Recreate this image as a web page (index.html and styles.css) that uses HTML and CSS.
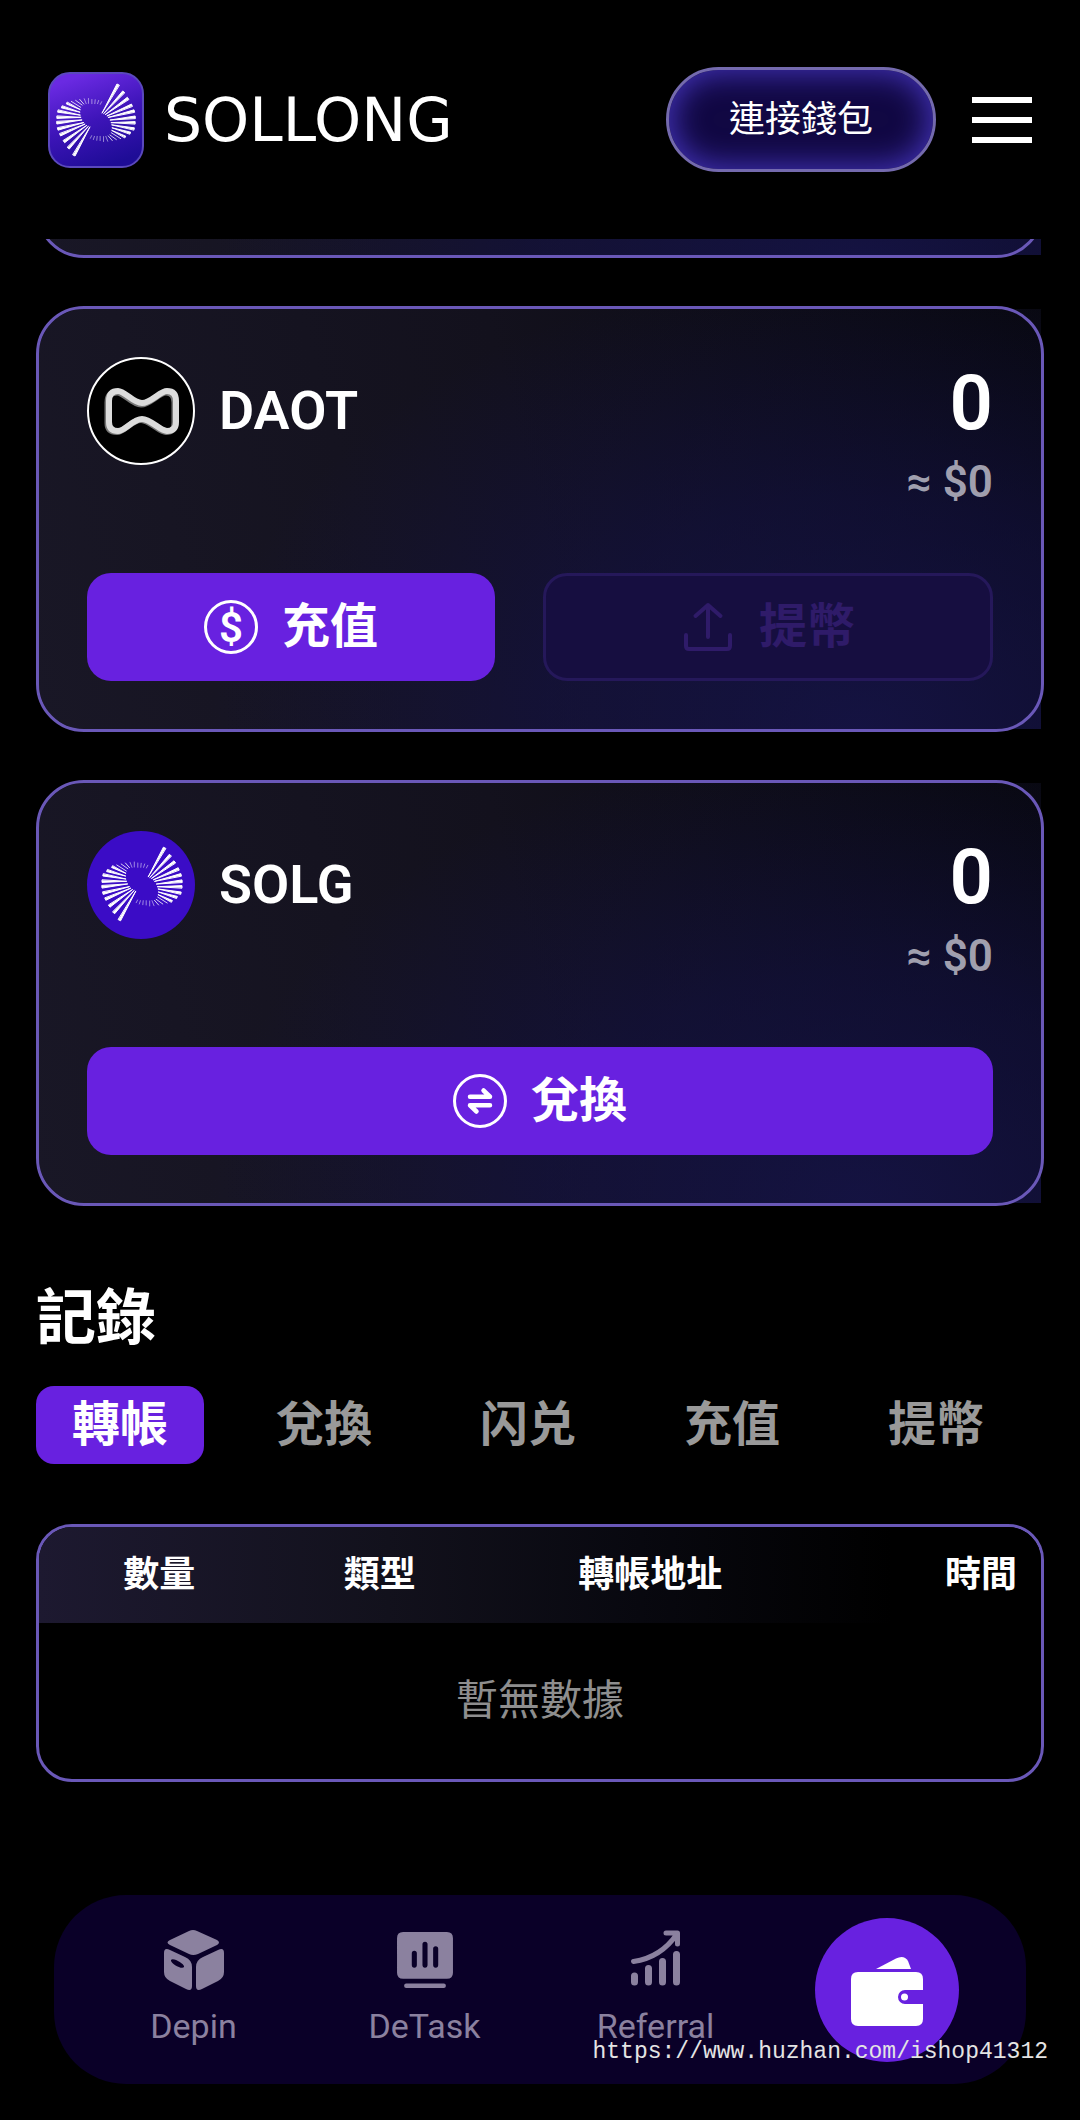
FILE: index.html
```html
<!DOCTYPE html>
<html lang="zh-Hant">
<head>
<meta charset="UTF-8" />
<meta name="viewport" content="width=device-width, initial-scale=1" />
<title>SOLLONG</title>
<link rel="stylesheet" href="styles.css">
</head>
<body>
  <!-- shared shapes -->
  <svg class="defs" aria-hidden="true">
    <symbol id="burst" viewBox="0 0 108 108">
      <g id="fan" fill="#fff" stroke="#fff" stroke-linecap="round" stroke-linejoin="round">
        <g stroke-width="1">
          <path d="M61.3 45.7 76.4 16.2 78.6 17.3z"/>
          <path d="M63 46.3 82.3 23.3 84.2 24.9z"/>
          <path d="M64.7 47.3 87 29.8 88.4 31.7z"/>
          <path d="M66.5 48.7 91.2 36.7 92.1 38.8z"/>
          <path d="M67.8 50.3 93.8 42.6 94.4 44.8z"/>
          <path d="M69.6 53 95 48.9 95.2 51.2z"/>
          <path d="M70.6 55.7 95 54.6 95 56.8z"/>
          <path d="M71.3 58 94.2 61 93.8 63z"/>
          <path d="M71.6 61 90.4 65.4 89.7 67.2z"/>
          <path d="M71.3 63.7 85.4 69.5 84.6 71z"/>
        </g>
        <g stroke-width="1" fill="none" opacity=".8">
          <path d="M70.6 66 80.2 72M69.2 68.3 75.8 73M67.5 69.3 71.6 74"/>
        </g>
        <g stroke-width="1" fill="none" opacity=".5">
          <path d="M65 69.7 67 74.7M62.7 70V75M59.2 69.7V74M56.2 69.7 55.8 73.7M53.4 69.7 52.3 73M50.6 69 49.2 71.7"/>
        </g>
      </g>
      <use href="#fan" transform="rotate(180 55 53)"/>
    </symbol>
  </svg>

  <header class="header">
    <a class="brand" href="#" aria-label="SOLLONG">
      <span class="brand-mark"><svg viewBox="8 6 94 94" aria-hidden="true"><use href="#burst" width="108" height="108"/></svg></span>
      <span class="brand-name">SOLLONG</span>
    </a>
    <div class="header-right">
      <button type="button" class="connect">連接錢包</button>
      <button type="button" class="menu" aria-label="Menu"><span></span><span></span><span></span></button>
    </div>
  </header>

  <main class="main">
    <section class="assets">
      <div class="card-peek">
        <div class="card"></div>
      </div>

      <article class="card">
        <div class="card-top">
          <div class="token">
            <svg class="token-icon" viewBox="0 0 108 108" aria-hidden="true">
              <circle cx="54" cy="54" r="53" fill="#000" stroke="#fff" stroke-width="2"/>
              <g fill="none" stroke-width="6">
                <path stroke="#777" d="M20.5 45.5Q20.5 35.5 30 35.5C37 35.5 45 47.5 54 47.5C63 47.5 72 35.5 79 35.5Q87.5 35.5 87.5 45.5V66Q87.5 75 79 75C72 75 63 63 54 63C45 63 37 75 30 75Q20.5 75 20.5 66Z"/>
                <path stroke="#dcdcdc" d="M22 44Q22 34 31 34C38 34 46 46 55 46C64 46 73 34 80 34Q89 34 89 44V65Q89 74 80 74C73 74 64 62 55 62C46 62 38 74 31 74Q22 74 22 65Z"/>
              </g>
            </svg>
            <h3>DAOT</h3>
          </div>
          <div class="balance">
            <p class="amount">0</p>
            <p class="fiat">≈ $0</p>
          </div>
        </div>
        <div class="actions actions-two">
          <button type="button" class="btn">
            <svg class="btn-icon" viewBox="0 0 54 54" aria-hidden="true">
              <circle cx="27" cy="27" r="25.5" fill="none" stroke="#fff" stroke-width="3"/>
              <text class="dollar" x="27" y="42" text-anchor="middle">$</text>
            </svg>
            充值
          </button>
          <button type="button" class="btn btn-outline" disabled>
            <svg class="btn-icon" viewBox="0 0 54 54" fill="none" stroke="currentColor" stroke-width="4" stroke-linecap="round" stroke-linejoin="round" aria-hidden="true">
              <path d="M27 37V5M14.5 16 27 5 39.5 16M5 35V46Q5 49 8 49H46Q49 49 49 46V35"/>
            </svg>
            提幣
          </button>
        </div>
      </article>

      <article class="card">
        <div class="card-top">
          <div class="token">
            <svg class="token-icon" viewBox="0 0 108 108" aria-hidden="true">
              <circle cx="54" cy="54" r="54" fill="#3b0cc6"/>
              <use href="#burst" width="108" height="108"/>
            </svg>
            <h3>SOLG</h3>
          </div>
          <div class="balance">
            <p class="amount">0</p>
            <p class="fiat">≈ $0</p>
          </div>
        </div>
        <div class="actions">
          <button type="button" class="btn">
            <svg class="btn-icon" viewBox="0 0 54 54" fill="none" stroke="#fff" stroke-linecap="round" stroke-linejoin="round" aria-hidden="true">
              <circle cx="27" cy="27" r="25.5" stroke-width="3"/>
              <path stroke-width="4.5" d="M17 22.7H37L30.5 16.5M37 31.3H17L23.5 37.5"/>
            </svg>
            兌換
          </button>
        </div>
      </article>
    </section>

    <section class="records">
      <h2>記錄</h2>
      <div class="tabs" role="tablist">
        <button type="button" class="tab active" role="tab" aria-selected="true">轉帳</button>
        <button type="button" class="tab" role="tab">兌換</button>
        <button type="button" class="tab" role="tab">闪兑</button>
        <button type="button" class="tab" role="tab">充值</button>
        <button type="button" class="tab" role="tab">提幣</button>
      </div>
      <div class="table-wrap">
        <table>
          <thead>
            <tr>
              <th class="col-amount">數量</th>
              <th class="col-type">類型</th>
              <th class="col-address">轉帳地址</th>
              <th class="col-time">時間</th>
            </tr>
          </thead>
          <tbody>
            <tr><td colspan="4">暫無數據</td></tr>
          </tbody>
        </table>
      </div>
    </section>
  </main>

  <nav class="tabbar">
    <a href="#depin">
      <svg viewBox="0 0 60 60" fill="currentColor" aria-hidden="true">
        <path d="M25 1Q29-1 33 1L53 10Q57 12.5 53 15L34 24Q29 26 25 24L6 15Q1 12.5 6 10Z"/>
        <path fill-rule="evenodd" d="M0 23Q0 17 6 20L21 27Q28 30 28 37V56Q28 62 22 59L6 51Q0 48 0 42ZM7 30C6 33 18 40 20 37C21 34 9 27 7 30Z"/>
        <path d="M60 23Q60 17 54 20L39 27Q32 30 32 37V56Q32 62 38 59L54 51Q60 48 60 42Z"/>
      </svg>
      <span>Depin</span>
    </a>
    <a href="#detask">
      <svg viewBox="-2 -2 59 59" fill="currentColor" aria-hidden="true">
        <path fill-rule="evenodd" d="M6 0H49Q55 0 55 6V40Q55 46 49 46H6Q0 46 0 40V6Q0 0 6 0ZM14.5 21V32.5A2.5 2.5 0 0 0 19.5 32.5V21A2.5 2.5 0 0 0 14.5 21ZM25 12V32.5A2.5 2.5 0 0 0 30 32.5V12A2.5 2.5 0 0 0 25 12ZM35.5 16.5V32.5A2.5 2.5 0 0 0 40.5 32.5V16.5A2.5 2.5 0 0 0 35.5 16.5Z"/>
        <rect x="7" y="50.5" width="41" height="4.5" rx="2"/>
      </svg>
      <span>DeTask</span>
    </a>
    <a href="#referral">
      <svg viewBox="-5 0 60 60" fill="none" stroke="currentColor" stroke-width="7" stroke-linecap="round" stroke-linejoin="round" aria-hidden="true">
        <path d="M3.5 46V52M17.5 38.5V52M31.5 31.5V52M45.5 24.5V52"/>
        <path stroke-width="5" d="M2.5 31.5C20 29 35 20 46 4M35 3H46.5V14"/>
      </svg>
      <span>Referral</span>
    </a>
    <a class="current" href="#wallet" aria-label="Wallet">
      <svg viewBox="0 -3 72 72" fill="#fff" aria-hidden="true">
        <path d="M25 12 45 1.5Q53-2.5 57 4L60 12Z"/>
        <path d="M7 15H65Q72 15 72 22V33H54A7 7 0 0 0 54 47H72V62Q72 69 65 69H7Q0 69 0 62V22Q0 15 7 15Z"/>
        <circle cx="53.5" cy="40" r="3.5"/>
      </svg>
    </a>
  </nav>

  <p class="watermark">https://www.huzhan.com/ishop41312</p>
</body>
</html>
```

FILE: styles.css
```css
* {margin: 0; padding: 0; box-sizing: border-box;}
body {
  font-family: Roboto, "Noto Sans CJK TC", sans-serif;
  background: #000;
  color: #fff;
  min-height: 100vh;
  display: flex;
  flex-direction: column;
  position: relative;
}
button {
  font-family: inherit;
  color: inherit;
  background: none;
  border: none;
  cursor: pointer;
}
a {
  color: inherit;
  text-decoration: none;
}
.defs {
  position: absolute;
  width: 0;
  height: 0;
}

/* header */
.header {
  display: flex;
  align-items: center;
  justify-content: space-between;
  padding: 67px 48px;
  background: #000;
}
.brand {
  display: flex;
  align-items: center;
  gap: 20px;
}
.brand-mark {
  width: 96px;
  height: 96px;
  border: 2px solid #5a48bd;
  border-radius: 22px;
  background: linear-gradient(160deg, #6a2ae2 10%, #3d14b8 50%, #1e0c96 90%);
  overflow: hidden;
}
.brand-mark svg {
  display: block;
  width: 100%;
}
.brand-name {
  font-family: "DejaVu Sans", sans-serif;
  font-size: 60px;
  line-height: 64px;
}
.header-right {
  display: flex;
  align-items: center;
  gap: 36px;
}
.connect {
  padding: 25px 60px 23px;
  border: 3px solid #746aae;
  border-radius: 53px;
  background: #110843;
  box-shadow: inset 0 0 30px 4px #4131b4;
  font-size: 36px;
  line-height: 51px;
}
.menu {
  display: flex;
  flex-direction: column;
  gap: 14px;
  width: 60px;
}
.menu span {
  height: 6px;
  background: #fff;
}

/* asset cards */
.main {
  padding: 0 36px;
}
.assets {
  display: flex;
  flex-direction: column;
  gap: 48px;
}
.card-peek {
  display: flex;
  align-items: flex-end;
  height: 19px;
  overflow: hidden;
}
.card-peek .card {
  width: 100%;
  height: 240px;
  flex-shrink: 0;
}
.card {
  position: relative;
  padding: 48px;
  border: 3px solid transparent;
  border-radius: 48px 0 0 48px;
  background:
    radial-gradient(ellipse 65% 110% at 82% 100%, rgba(22, 20, 76, 0.8), rgba(20, 18, 76, 0.5) 50%, rgba(16, 14, 60, 0) 100%) padding-box,
    linear-gradient(75deg, #191726, #13111d 50%, #08080f) padding-box;
}
.card::after {
  content: "";
  position: absolute;
  inset: -3px;
  border: 3px solid #6a58b8;
  border-radius: 48px;
  pointer-events: none;
}
.card-top {
  display: flex;
  align-items: flex-start;
  justify-content: space-between;
}
.token {
  display: flex;
  align-items: center;
  gap: 24px;
}
.token-icon {
  width: 108px;
  height: 108px;
}
.token h3 {
  font-size: 54px;
  font-weight: 600;
  line-height: 66px;
}
.balance {
  text-align: right;
}
.amount {
  font-size: 76px;
  font-weight: 600;
  line-height: 92px;
}
.fiat {
  font-size: 44px;
  font-weight: 600;
  line-height: 66px;
  color: #a09fae;
}
.actions {
  display: grid;
  gap: 48px;
  margin-top: 58px;
}
.actions-two {
  grid-template-columns: 408fr 450fr;
}
.btn {
  display: flex;
  align-items: center;
  justify-content: center;
  gap: 24px;
  height: 108px;
  border-radius: 24px;
  background: #6821e0;
  font-size: 48px;
  font-weight: 700;
  line-height: 54px;
}
.btn-outline {
  border: 3px solid #25185a;
  background: #160e40;
  color: #2f1b69;
}
.btn-icon {
  width: 54px;
  height: 54px;
}
.dollar {
  font-size: 42px;
  font-weight: 600;
  fill: #fff;
}

/* records */
.records h2 {
  margin: 71px 0 25px;
  font-size: 60px;
  font-weight: 700;
  line-height: 84px;
}
.tabs {
  display: flex;
  gap: 36px;
}
.tab {
  padding: 0 36px;
  border-radius: 18px;
  font-size: 48px;
  font-weight: 700;
  line-height: 78px;
  color: #999;
}
.tab.active {
  background: #6821e0;
  color: #fff;
}
.table-wrap {
  margin-top: 60px;
  border: 3px solid #6a58b8;
  border-radius: 36px;
  overflow: hidden;
}
table {
  width: 100%;
  border-collapse: collapse;
}
thead {
  background: linear-gradient(90deg, #1d1930, #12111c 35%, #08080f 60%, #000 85%);
}
th {
  height: 96px;
  font-size: 36px;
  font-weight: 700;
  line-height: 48px;
}
.col-amount {width: 24%;}
.col-type {width: 20%;}
.col-address {width: 34%;}
.col-time {
  width: 22%;
  padding-right: 24px;
  text-align: right;
}
td {
  height: 156px;
  font-size: 42px;
  line-height: 48px;
  text-align: center;
  color: #8e8e8e;
}

/* bottom bar */
.tabbar {
  display: grid;
  grid-template-columns: repeat(4, 1fr);
  align-items: center;
  height: 189px;
  margin: auto 54px 36px;
  padding: 0 24px;
  border-radius: 72px;
  background: #0a0028;
}
.tabbar a {
  display: flex;
  flex-direction: column;
  align-items: center;
  gap: 12px;
  color: #8b819f;
  font-size: 34px;
  line-height: 48px;
}
.tabbar svg {
  width: 60px;
  height: 60px;
}
.tabbar .current {
  justify-content: center;
  justify-self: center;
  width: 144px;
  height: 144px;
  border-radius: 50%;
  background: #6821e0;
}
.tabbar .current svg {
  width: 72px;
  height: 72px;
}
.watermark {
  position: absolute;
  right: 32px;
  bottom: 54px;
  font-family: "Liberation Mono", monospace;
  font-size: 23px;
  line-height: 28px;
  color: #e4e4e4;
}
```
